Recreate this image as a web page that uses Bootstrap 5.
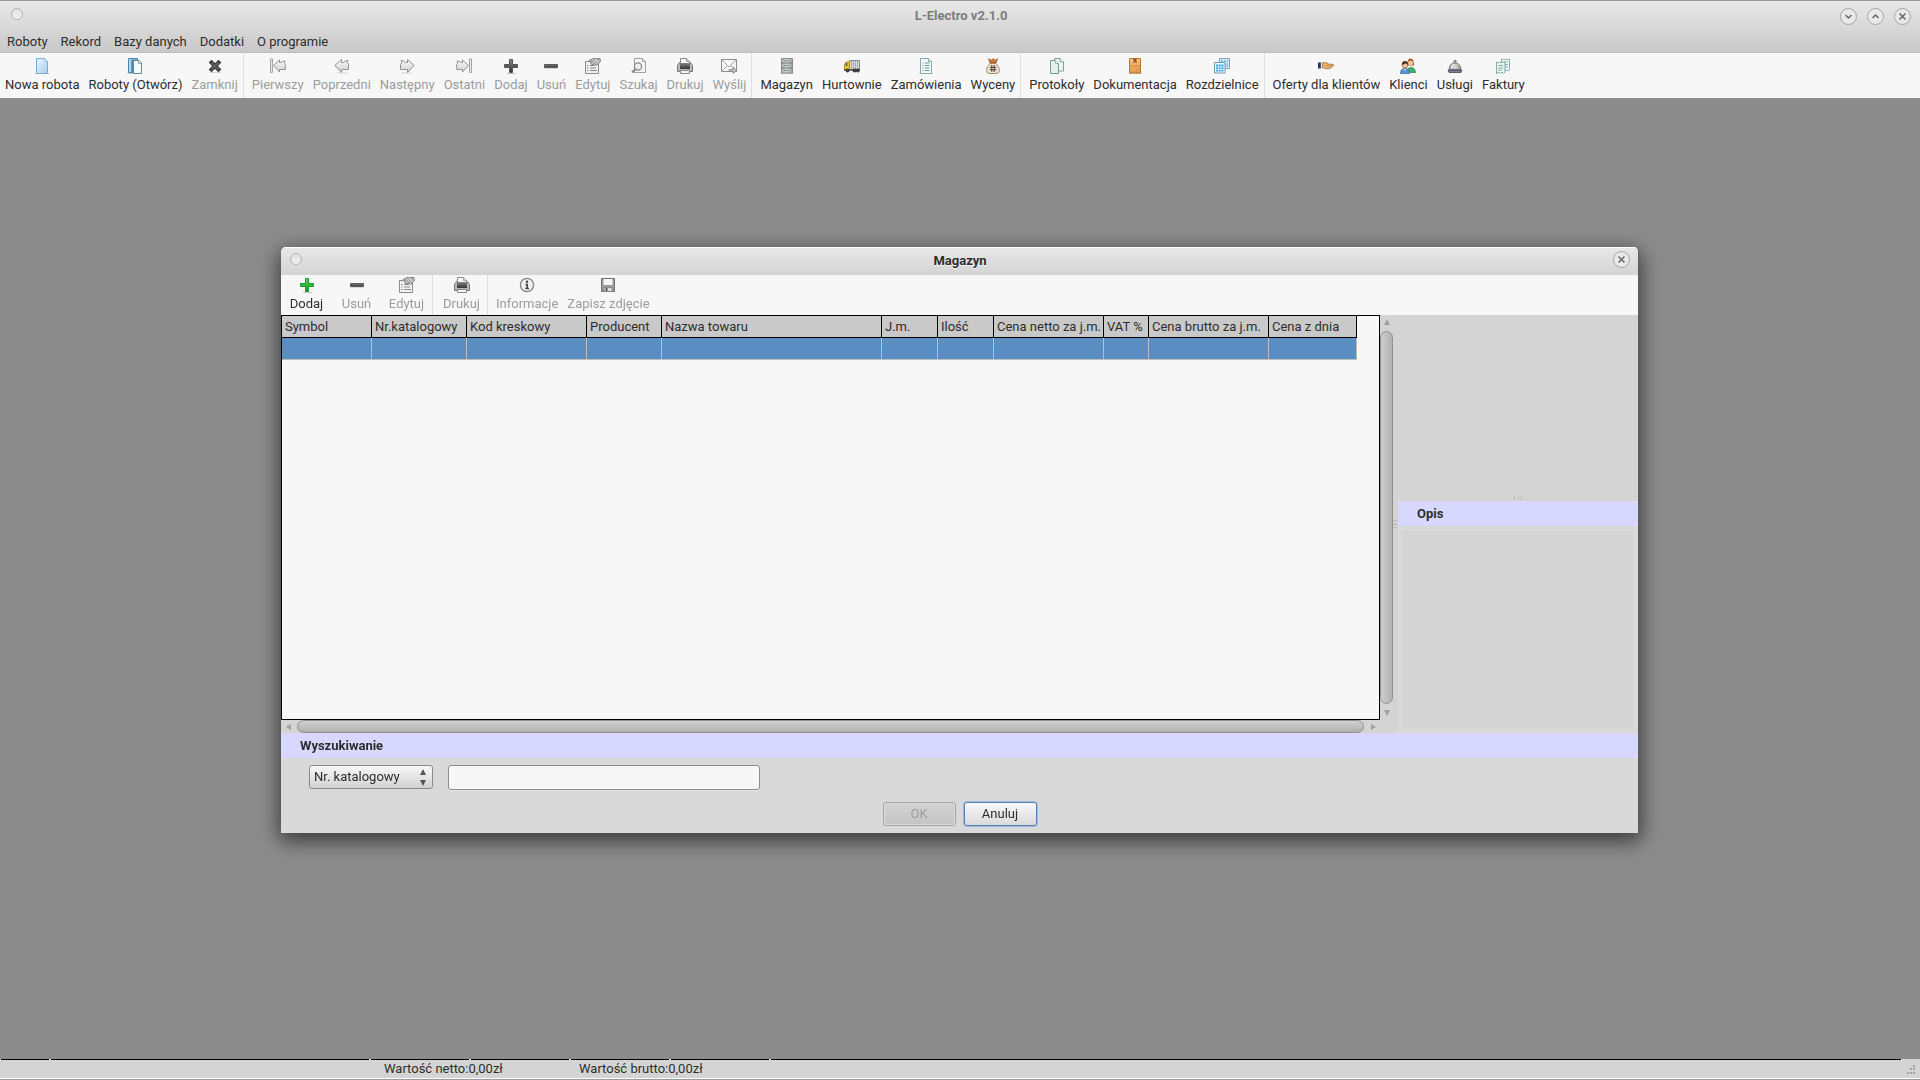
<!DOCTYPE html>
<html lang="pl">
<head>
<meta charset="utf-8">
<meta name="viewport" content="width=device-width, initial-scale=1">
<title>L-Electro v2.1.0</title>
<link rel="stylesheet" href="https://cdn.jsdelivr.net/npm/bootstrap@5.3.0/dist/css/bootstrap.min.css">
<style>
  body { font-family: Roboto, "Noto Sans", sans-serif; font-size: 13px; line-height: 16px; color: #2d2d2d; background: #8c8c8c; }
  button, input, select { font: inherit; color: inherit; }
  .app-head { background: linear-gradient(#e9e9e9, #c8c8c8); border-top: 1px solid #9a9a9a; border-bottom: 1px solid #bdbdbd; }
  .app-title { height: 30px; padding: 0 9px 0 11px; }
  .app-title h1 { font-size: 13px; line-height: 16px; color: #7d7d7d; }
  .title-side { width: 120px; }
  .win-btns { gap: 10px; }
  .menu-bar { height: 21px; padding-left: 1px; }
  .menu-bar a { color: #2d2d2d; padding: 3px 7px 1px 6px; text-decoration: none; }
  .ring { width: 12px; height: 12px; border: 1px solid #b3b3b3; border-radius: 50%; background: linear-gradient(#e2e2e2, #f1f1f1); }
  .win-btn { width: 17px; height: 17px; border: 1px solid #a5a5a5; border-radius: 50%; background: #e9e9e9; padding: 0; line-height: 0; }
  .win-btn svg { width: 9px; height: 9px; fill: none; stroke: #666; stroke-width: 1.5; }
  .tools { background: #f7f7f7; min-height: 40px; padding-left: 1px; }
  .tools.main-tools { min-height: 45px; }
  .tool { border: 0; background: none; padding: 2px 5px 0 4px; display: flex; flex-direction: column; align-items: center; white-space: nowrap; }
  .main-tools .tool { padding-top: 5px; }
  .tool svg { width: 16px; height: 16px; margin-bottom: 3px; }
  .tool:disabled { color: #9c9c9c; }
  .tool-wide { min-width: 50px; }
  .tool-line { width: 5px; border-left: 1px solid #dedede; }
  .status { height: 21px; background: #d4d4d4; border-bottom: 1px solid #9d9d9d; box-shadow: inset 0 -1px #fff; }
  .seg-line { gap: 2px; padding: 0 19px 0 1px; height: 1px; background: #d4d4d4; }
  .seg-line span { background: #000; width: 98px; }
  .seg-line .seg-a { width: 48px; }
  .seg-line .seg-b { width: 318px; }
  .status-text { padding-left: 384px; padding-top: 1px; }
  .status-text span { width: 195px; white-space: nowrap; }
  .grip { right: 4px; bottom: 4px; }
  .dialog-win { width: 1358px; max-width: 100%; background: #d9d9d9; border-right: 1px solid #5e5e5e; border-radius: 5px 5px 0 0; box-shadow: 0 6px 20px 2px rgba(0,0,0,.6); overflow: hidden; }
  .dialog-head { height: 28px; background: linear-gradient(#e7e7e7, #d4d4d4); border-top: 1px solid #fff; padding: 0 8px 1px 9px; }
  .dialog-head h2 { font-size: 13px; line-height: 16px; text-shadow: 0 1px #f4f4f4; }
  .dialog-main { height: 418px; background: #d4d4d4; }
  .sheet { background: #f7f7f7; border: 1px solid #000; overflow: hidden; }
  .sheet table { table-layout: fixed; width: 1075px; border-collapse: separate; border-spacing: 0; }
  .sheet th { height: 22px; padding: 1px 0 0 3px; font-weight: 400; background: #c9c9c9; border-right: 1px solid #000; border-bottom: 1px solid #000; white-space: nowrap; }
  .sheet td { height: 22px; padding: 0; background: #5a8dc2; border-right: 1px solid #bdbdbd; border-bottom: 1px solid #bdbdbd; }
  .bar-v { width: 13px; } .bar-h { height: 13px; padding-right: 15px; }
  .bar-v svg, .bar-h svg { width: 8px; height: 6px; fill: #9f9f9f; }
  .thumb { border: 1px solid #8f8f8f; border-radius: 7px; }
  .bar-v .thumb { width: 13px; margin: 6px 0 6px; background: linear-gradient(90deg, #cfcfcf, #b1b1b1); }
  .bar-h .thumb { height: 13px; margin: 0 6px 0 4px; background: linear-gradient(#cfcfcf, #b1b1b1); }
  .split-v { width: 5px; }
  .split-v svg { width: 4px; height: 8px; } .split-h { height: 5px; } .split-h svg { width: 8px; height: 4px; }
  .split-v svg, .split-h svg { stroke: #b9b9b9; }
  .side { width: 240px; }
  .photo { height: 181px; }
  .band { background: #d8d8ff; font-size: 13px; line-height: 16px; height: 25px; padding: 1px 19px 0; margin: 0; font-weight: 700; }
  .desc-wrap { background: #d9d9d9; padding: 5px; }
  .desc { background: #d4d4d4; border: 0; resize: none; }
  .search { height: 75px; padding-top: 7px; }
  .pick { height: 24px; width: 124px; padding: 0 20px 1px 4px; appearance: none; border: 1px solid #8a8a8a; border-radius: 3px; background: linear-gradient(#f8f8f8, #d2d2d2); }
  .pick-wrap svg { right: 6px; top: 4px; width: 8px; height: 17px; fill: #555; }
  .query { width: 312px; height: 25px; border: 1px solid #8d8d8d; border-radius: 3px; background: #f7f7f7; box-shadow: 0 1px #e4e4e4; }
  .fields { padding-left: 28px; gap: 15px; }
  .answers { gap: 8px; padding-top: 12px; }
  .dlg-btn { width: 73px; height: 24px; padding: 0 0 1px; border: 1px solid #8a8a8a; border-radius: 3px; background: linear-gradient(#f8f8f8, #dadada); }
  .dlg-btn:disabled { color: #9c9c9c; border-color: #a3a3a3; background: linear-gradient(#d2d2d2, #c5c5c5); box-shadow: inset 0 0 0 1px #dcdcdc; }
  .dlg-main { border-color: #5182b8; box-shadow: 0 0 0 1px #9fb9d6; }
</style>
<script src="https://cdn.jsdelivr.net/npm/bootstrap@5.3.0/dist/js/bootstrap.bundle.min.js"></script>
</head>
<body class="min-vh-100 d-flex flex-column">

<svg class="position-absolute" width="0" height="0" aria-hidden="true">
  <defs>
    <linearGradient id="g-blue" x2="1" y2="1"><stop stop-color="#e9f4fd"/><stop offset="1" stop-color="#a9cfee"/></linearGradient>
    <linearGradient id="g-gray" x2="0" y2="1"><stop stop-color="#fafafa"/><stop offset="1" stop-color="#cfcfcf"/></linearGradient>
    <linearGradient id="g-dark" x2="0" y2="1"><stop stop-color="#858585"/><stop offset="1" stop-color="#333"/></linearGradient>
    <linearGradient id="g-green" x2="0" y2="1"><stop stop-color="#5fd35f"/><stop offset="1" stop-color="#0b9b1e"/></linearGradient>
    <linearGradient id="g-steel"><stop stop-color="#a8a8a8"/><stop offset=".5" stop-color="#d5dcd8"/><stop offset="1" stop-color="#999"/></linearGradient>
    <linearGradient id="g-wood" x2="0" y2="1"><stop stop-color="#f3c583"/><stop offset="1" stop-color="#dc9a4c"/></linearGradient>
  </defs>
  <symbol id="i-new" viewBox="0 0 16 16"><path d="M1 15.500h14" stroke="#000" opacity=".18"/><path d="M2.500.5h8l3 3v12h-11z" fill="url(#g-blue)" stroke="#79abd1"/><path d="M10.500.500v3h3z" fill="#fff" stroke="#79abd1" stroke-width=".6"/></symbol>
  <symbol id="i-open" viewBox="0 0 16 16"><path d="M0 15.500h15" stroke="#000" opacity=".18"/><path d="M1.500.500h9v14h-9z" fill="#7fb3d3" stroke="#4e88ab"/><path d="M2 1h2v13H2z" fill="#b3d7ec"/><path d="M6.500 2.500h5.500l2.500 2.500v10.500h-8z" fill="#f3f9f8" stroke="#668a8b"/><path d="M11.500 3v2.500H14" fill="none" stroke="#668a8b" stroke-width=".7"/><path d="M4.500 1l2 2v12l-2-1z" fill="#4788ad"/></symbol>
  <symbol id="i-x" viewBox="0 0 16 16"><path d="M3 14.500h11" stroke="#000" opacity=".15"/><path d="M4.500 4.500l7 7M11.500 4.500l-7 7" stroke="#3c3c3c" stroke-width="4" stroke-linecap="square"/><path d="M4.500 4.500l7 7M11.500 4.500l-7 7" stroke="#666" stroke-width="1.600"/></symbol>
  <symbol id="i-prev" viewBox="0 0 16 16"><path d="M3 15h11" stroke="#000" opacity=".12"/><path d="M.8 7.500l6.700-6v3h2q1.500-2 4.500-2-2 2 .500 4v5h-7v3z" fill="url(#g-gray)" stroke="#929292" stroke-linejoin="round"/></symbol>
  <symbol id="i-next" viewBox="0 0 16 16"><path d="M2 15h11" stroke="#000" opacity=".12"/><path d="M15.200 7.500l-6.700-6v3h-2q-1.500-2-4.500-2 2 2-.500 4v5h7v3z" fill="url(#g-gray)" stroke="#929292" stroke-linejoin="round"/></symbol>
  <symbol id="i-first" viewBox="0 0 16 16"><path d="M.5 1h2v13.500h-2z" fill="#e5e5e5" stroke="#939393" stroke-width=".8"/><path d="M3.500 7.500l6-5.500v2.500h1.500q1-1.500 4-1.500-1.500 2 .3 3.500v5h-5.800v2.500z" fill="url(#g-gray)" stroke="#929292" stroke-linejoin="round"/></symbol>
  <symbol id="i-last" viewBox="0 0 16 16"><path d="M13.500 1h2v13.500h-2z" fill="#e5e5e5" stroke="#939393" stroke-width=".8"/><path d="M12.500 7.500l-6-5.500v2.500h-1.500q-1-1.500-4-1.500 1.500 2-.3 3.500v5h5.800v2.500z" fill="url(#g-gray)" stroke="#929292" stroke-linejoin="round"/></symbol>
  <symbol id="i-plus" viewBox="0 0 16 16"><path d="M4 15.500h9" stroke="#000" opacity=".2"/><path d="M6.500 1.500h3v5h5v3h-5v5h-3v-5h-5v-3h5z" fill="url(#g-dark)" stroke="#555"/></symbol>
  <symbol id="i-add" viewBox="0 0 16 16"><path d="M4 15.500h9" stroke="#000" opacity=".2"/><path d="M6.500 1.500h3v5h5v3h-5v5h-3v-5h-5v-3h5z" fill="url(#g-green)" stroke="#179c2d"/></symbol>
  <symbol id="i-minus" viewBox="0 0 16 16"><path d="M1 10.500h14" stroke="#000" opacity=".12"/><path d="M1.500 6.500h13v3h-13z" fill="url(#g-dark)" stroke="#5a5a5a"/></symbol>
  <symbol id="i-edit" viewBox="0 0 16 16"><path d="M.5 3.500h13v12h-13z" fill="#f2f2f2" stroke="#8c8c8c"/><path d="M2 7.500h1.500M5 7.500h5M2 10h1.500M5 10h6M2 12.500h1.500M5 12.500h7" stroke="#888"/><path d="M4 2.500l4-2h7l.5 3-4 4-2-1.500-2.500 1z" fill="#aaa" stroke="#777" stroke-width=".8"/><path d="M7 1l5 5M9.500.500l4 4M12 1l-5 5M15 2l-4 4" stroke="#ddd" stroke-width=".7"/></symbol>
  <symbol id="i-find" viewBox="0 0 16 16"><path d="M3.500.500h8l3 3v11h-11z" fill="#f5f5f5" stroke="#a0a0a0"/><path d="M11.500.500v3h3" fill="#ddd" stroke="#a0a0a0"/><circle cx="7" cy="8.500" r="3.600" fill="#eee" stroke="#888" stroke-width="1.200"/><path d="M4.500 11l-3.500 3.500" stroke="#888" stroke-width="2.200"/></symbol>
  <symbol id="i-print" viewBox="0 0 16 16"><path d="M.5 7.500l2-3h11l2 3v6h-15z" fill="#b7b7b7" stroke="#767676"/><path d="M3.500.500h6l3 3v4h-9z" fill="#f8f8f8" stroke="#8b8b8b"/><path d="M9.500.500v3h3" fill="#ccc" stroke="#8b8b8b" stroke-width=".7"/><path d="M3 5h10v6H3z" fill="url(#g-dark)"/><path d="M3.500 12.500h9v3h-9z" fill="#f5f5f5" stroke="#888"/></symbol>
  <symbol id="i-mail" viewBox="0 0 16 16"><path d="M.5 1.500h15v12H.5z" fill="#f5f5f5" stroke="#8d8d8d"/><path d="M1 2l7 7 7-7M1 13l5.500-5.500M15 13l-5.500-5.500" fill="none" stroke="#a2a2a2"/><path d="M8 11.500h4v-2.500l4 3.500-4 3v-2H8z" fill="#bbb" stroke="#808080" stroke-width=".7"/></symbol>
  <symbol id="i-store" viewBox="0 0 16 16"><path d="M1 15.500h14" stroke="#000" opacity=".18"/><path d="M2.500.500h11v14.500h-11z" fill="url(#g-steel)" stroke="#8c8c90"/><path d="M2.500 5h11M2.500 10h11" stroke="#77777c"/><path d="M5 2.800h5M5 7.500h5M5 12.500h5" stroke="#7a8f86"/></symbol>
  <symbol id="i-truck" viewBox="0 0 16 16"><path d="M5.500 2.500h10v9h-10z" fill="#d5d8d5" stroke="#838a87"/><path d="M7.500 3v8M9.500 3v8M11.500 3v8M13.500 3v8" stroke="#9da5a0" stroke-width=".8"/><path d="M.5 11.500v-4.500l1.500-3h3.500v7.500z" fill="#f7c52b" stroke="#c78610"/><path d="M1.500 5h2v3h-2z" fill="#5b6f87"/><path d="M0 12h16" stroke="#555" stroke-width="1.500"/><g fill="#555" stroke="#222"><circle cx="3.500" cy="12.500" r="1.500"/><circle cx="10.500" cy="12.500" r="1.500"/><circle cx="13.800" cy="12.500" r="1.500"/></g></symbol>
  <symbol id="i-order" viewBox="0 0 16 16"><path d="M1 15.500h14" stroke="#000" opacity=".18"/><path d="M2.500.500h8l3 3v12h-11z" fill="#f1faf9" stroke="#8aa9ab"/><path d="M10.500.500v3h3" fill="#fff" stroke="#8aa9ab"/><path d="M4.500 5h1M7 5h4.500M4.500 7.500h1M7 7.500h4.500M4.500 10h1M7 10h4.500M4.500 12.500h1M7 12.500h4.500" stroke="#6c9799"/></symbol>
  <symbol id="i-bag" viewBox="0 0 16 16"><path d="M5 5L3.500.800l3 1.500L8 .500l2 1.800 2.500-1.500L11 5z" fill="#cf7a3e" stroke="#9b5426" stroke-width=".7"/><path d="M5.500 5h5q4 3.500 4 7.500 0 3-3.500 3h-6q-3.500 0-3.500-3Q1.500 8.500 5.500 5z" fill="#eee4d2" stroke="#a38c6c"/><path d="M5 4.800h6" stroke="#a85823" stroke-width="1.500"/><path d="M6.800 7v7M9.200 7v7M4.700 9.300h6.600M4.700 11.700h6.600" stroke="#4e4235"/></symbol>
  <symbol id="i-copy" viewBox="0 0 16 16"><path d="M5.500.500h5.500l3.500 3.500v9h-9z" fill="#eef8f6" stroke="#7c9fa1"/><path d="M11 .5V4h3.500" fill="#fff" stroke="#7c9fa1"/><path d="M1.500 2.500h5l3 3v10h-8z" fill="#e2f0ed" stroke="#77999b"/><path d="M6.500 2.500v3h3" fill="#fff" stroke="#77999b" stroke-width=".7"/></symbol>
  <symbol id="i-book" viewBox="0 0 16 16"><path d="M2 15.500h13" stroke="#000" opacity=".2"/><path d="M2.500.500h11v14.500h-11z" fill="url(#g-wood)" stroke="#b9762f"/><path d="M3 8h10" stroke="#c98a45"/><path d="M6.500.500h3v5l-1.500-1.500-1.500 1.500z" fill="#8c5628"/><path d="M13.500 11.500l-3.500 3.500v-3.500z" fill="#f7dab0" stroke="#b9762f" stroke-width=".7"/></symbol>
  <symbol id="i-grids" viewBox="0 0 16 16"><path d="M5.500.500h10v10h-10z" fill="#d9f0fa" stroke="#7fa3ad"/><path d="M7 2h7v7H7z" fill="#5fc4f0"/><path d="M9.500 2v7M12 2v7M7 4.500h7" stroke="#e3f5fc"/><path d="M.5 4.500h10.500v10.500H.5z" fill="#eefafe" stroke="#7499a4"/><path d="M2 6.500h7.500v7H2z" fill="#37aee8"/><path d="M4.500 6.500v7M7 6.500v7M2 9h7.500M2 11.500h7.500" stroke="#d7f1fc" stroke-width=".8"/></symbol>
  <symbol id="i-hand" viewBox="0 0 16 16"><path d="M0 4.500h3v6H0z" fill="#2c3557"/><path d="M3 4.500h1.500v5.500H3z" fill="#fff" stroke="#b8b8c0" stroke-width=".5"/><path d="M4.500 5l3-.5 3 1.500 5 .5q.8 1-.5 1.800-3 2.700-6 2.700l-4.500-1.500z" fill="#eab273" stroke="#a76f33" stroke-width=".8"/><path d="M8 7.500q3 1.500 6-.5" fill="none" stroke="#b67a3c" stroke-width=".8"/></symbol>
  <symbol id="i-people" viewBox="0 0 16 16"><path d="M7 14.500q0-5 4-5t4.500 5z" fill="#42b06a" stroke="#267f47" stroke-width=".7"/><path d="M7.500 7.500Q7 .500 10.500.500t3.500 7z" fill="#9b4e24"/><circle cx="10.500" cy="5" r="2.500" fill="#f3c699"/><path d="M.5 15.500q0-5 4.500-5t4.500 5z" fill="#5594d8" stroke="#2b64a6" stroke-width=".7"/><circle cx="5" cy="7" r="3" fill="#f4c396" stroke="#8a5635" stroke-width=".6"/><path d="M2 7q-.5-4 3-4t3 4L6 5.500z" fill="#563521"/><path d="M4 11l1 2 1-2z" fill="#fff"/></symbol>
  <symbol id="i-bell" viewBox="0 0 16 16"><circle cx="8" cy="3.500" r="1.300" fill="#aaa" stroke="#666" stroke-width=".8"/><path d="M2 11.500q.5-6.500 6-6.500t6 6.500z" fill="url(#g-steel)" stroke="#777"/><path d="M4.500 10q.5-3 2.500-3.500" fill="none" stroke="#fff"/><path d="M1 12h14l-1 2.500H2z" fill="#777b8a" stroke="#45475a" stroke-width=".8"/></symbol>
  <symbol id="i-bills" viewBox="0 0 16 16"><path d="M6.500 1l1 .8 1.300-.8 1.300.8 1.300-.8 1.300.8 1.800-.8v11l-1.500 1-1.500-1-1.500 1-1.500-1-2 1z" fill="#eff8f4" stroke="#799c9c" stroke-width=".8"/><path d="M9 4h4M9 6.500h4M10 9h3" stroke="#89b2a8"/><path d="M1.500 4l1.500.8L4.500 4l1.500.8L7.500 4 10 4.500V14l-1.500 1.500L7 14l-1.500 1.500L4 14l-2.500 1.500z" fill="#e7f4ef" stroke="#6f9696" stroke-width=".8"/><path d="M3.500 7.500h4.500M3.500 10h4.500M3.500 12h3" stroke="#80aaa0"/></symbol>
  <symbol id="i-info" viewBox="0 0 16 16"><circle cx="8" cy="8" r="6.600" fill="#f1f1f1" stroke="#858585" stroke-width="1.300"/><circle cx="8" cy="4.700" r="1.200" fill="#444"/><path d="M6.500 7.500h1.700v4M6.300 11.500h3.700" fill="none" stroke="#444" stroke-width="1.600"/></symbol>
  <symbol id="i-save" viewBox="0 0 16 16"><path d="M1.500 1.500h13v13H1.500z" fill="#9a9a9a" stroke="#707070"/><path d="M3.500 2h9v6h-9z" fill="#f4f4f4"/><path d="M4 10.500h8v4H4z" fill="#ddd" stroke="#777" stroke-width=".7"/><path d="M5.500 11h2v3h-2z" fill="#555"/></symbol>
</svg>

<header class="app-head">
  <div class="app-title d-flex align-items-center justify-content-between">
    <div class="title-side pb-1"><div class="ring"></div></div>
    <h1 class="fw-bold mb-0">L-Electro v2.1.0</h1>
    <div class="title-side win-btns d-flex justify-content-end">
      <button class="win-btn" type="button" aria-label="Minimalizuj"><svg viewBox="0 0 9 9"><path d="M1.500 3l3 3 3-3"/></svg></button>
      <button class="win-btn" type="button" aria-label="Maksymalizuj"><svg viewBox="0 0 9 9"><path d="M1.500 6l3-3 3 3"/></svg></button>
      <button class="win-btn" type="button" aria-label="Zamknij program"><svg viewBox="0 0 9 9"><path d="M1.500 1.500l6 6M7.500 1.500l-6 6"/></svg></button>
    </div>
  </div>
  <nav class="menu-bar d-flex">
    <a href="#">Roboty</a><a href="#">Rekord</a><a href="#">Bazy danych</a><a href="#">Dodatki</a><a href="#">O programie</a>
  </nav>
</header>

<div class="tools main-tools d-flex" role="toolbar" aria-label="Główny pasek">
  <button class="tool"><svg><use href="#i-new"/></svg>Nowa robota</button>
  <button class="tool"><svg><use href="#i-open"/></svg>Roboty (Otwórz)</button>
  <button class="tool" disabled><svg><use href="#i-x"/></svg>Zamknij</button>
  <div class="tool-line"></div>
  <button class="tool" disabled><svg><use href="#i-first"/></svg>Pierwszy</button>
  <button class="tool" disabled><svg><use href="#i-prev"/></svg>Poprzedni</button>
  <button class="tool" disabled><svg><use href="#i-next"/></svg>Następny</button>
  <button class="tool" disabled><svg><use href="#i-last"/></svg>Ostatni</button>
  <button class="tool" disabled><svg><use href="#i-plus"/></svg>Dodaj</button>
  <button class="tool" disabled><svg><use href="#i-minus"/></svg>Usuń</button>
  <button class="tool" disabled><svg><use href="#i-edit"/></svg>Edytuj</button>
  <button class="tool" disabled><svg><use href="#i-find"/></svg>Szukaj</button>
  <button class="tool" disabled><svg><use href="#i-print"/></svg>Drukuj</button>
  <button class="tool" disabled><svg><use href="#i-mail"/></svg>Wyślij</button>
  <div class="tool-line"></div>
  <button class="tool"><svg><use href="#i-store"/></svg>Magazyn</button>
  <button class="tool"><svg><use href="#i-truck"/></svg>Hurtownie</button>
  <button class="tool"><svg><use href="#i-order"/></svg>Zamówienia</button>
  <button class="tool"><svg><use href="#i-bag"/></svg>Wyceny</button>
  <div class="tool-line"></div>
  <button class="tool"><svg><use href="#i-copy"/></svg>Protokoły</button>
  <button class="tool"><svg><use href="#i-book"/></svg>Dokumentacja</button>
  <button class="tool"><svg><use href="#i-grids"/></svg>Rozdzielnice</button>
  <div class="tool-line"></div>
  <button class="tool"><svg><use href="#i-hand"/></svg>Oferty dla klientów</button>
  <button class="tool"><svg><use href="#i-people"/></svg>Klienci</button>
  <button class="tool"><svg><use href="#i-bell"/></svg>Usługi</button>
  <button class="tool"><svg><use href="#i-bills"/></svg>Faktury</button>
</div>

<main class="flex-grow-1"></main>

<footer class="status position-relative">
  <div class="seg-line d-flex">
    <span class="seg-a"></span><span class="seg-b"></span><span></span><span></span><span></span><span></span><span class="flex-fill"></span>
  </div>
  <div class="status-text d-flex"><span>Wartość netto:0,00zł</span><span>Wartość brutto:0,00zł</span></div>
  <svg class="grip position-absolute" width="10" height="10" fill="#a3a398"><path d="M7 0h2v2H7zM4 3h2v2H4zM7 3h2v2H7zM1 7h2v2H1zM4 7h2v2H4zM7 7h2v2H7z"/></svg>
</footer>

<div class="position-fixed top-0 start-0 w-100 h-100 d-flex align-items-center justify-content-center pe-none">
  <section class="dialog-win pe-auto" role="dialog" aria-labelledby="dlg-title">
    <div class="dialog-head d-flex align-items-center justify-content-between">
      <div class="title-side pb-1"><div class="ring"></div></div>
      <h2 id="dlg-title" class="fw-bold mb-0">Magazyn</h2>
      <div class="title-side pb-1 d-flex justify-content-end"><button class="win-btn" type="button" aria-label="Zamknij okno"><svg viewBox="0 0 9 9"><path d="M1.500 1.500l6 6M7.500 1.500l-6 6"/></svg></button></div>
    </div>
    <div class="tools d-flex" role="toolbar" aria-label="Magazyn">
      <button class="tool tool-wide"><svg><use href="#i-add"/></svg>Dodaj</button>
      <button class="tool tool-wide" disabled><svg><use href="#i-minus"/></svg>Usuń</button>
      <button class="tool tool-wide" disabled><svg><use href="#i-edit"/></svg>Edytuj</button>
      <div class="tool-line"></div>
      <button class="tool tool-wide" disabled><svg><use href="#i-print"/></svg>Drukuj</button>
      <div class="tool-line"></div>
      <button class="tool tool-wide" disabled><svg><use href="#i-info"/></svg>Informacje</button>
      <button class="tool tool-wide" disabled><svg><use href="#i-save"/></svg>Zapisz zdjęcie</button>
    </div>
    <div class="dialog-main d-flex">
      <div class="flex-fill d-flex flex-column overflow-hidden">
        <div class="flex-fill d-flex overflow-hidden">
          <div class="sheet flex-fill">
            <table>
              <colgroup>
                <col style="width:90px"><col style="width:95px"><col style="width:120px"><col style="width:75px"><col style="width:220px"><col style="width:56px"><col style="width:56px"><col style="width:110px"><col style="width:45px"><col style="width:120px"><col style="width:88px">
              </colgroup>
              <thead><tr><th>Symbol</th><th>Nr.katalogowy</th><th>Kod kreskowy</th><th>Producent</th><th>Nazwa towaru</th><th>J.m.</th><th>Ilość</th><th>Cena netto za j.m.</th><th>VAT %</th><th>Cena brutto za j.m.</th><th>Cena z dnia</th></tr></thead>
              <tbody><tr><td></td><td></td><td></td><td></td><td></td><td></td><td></td><td></td><td></td><td></td><td></td></tr></tbody>
            </table>
          </div>
          <div class="bar-v d-flex flex-column align-items-center pt-1">
            <svg viewBox="0 0 8 6" class="flex-shrink-0"><path d="M4 0l3 6H1z"/></svg>
            <div class="thumb flex-fill"></div>
            <svg viewBox="0 0 8 6" class="flex-shrink-0 mb-1"><path d="M4 6l3-6H1z"/></svg>
          </div>
        </div>
        <div class="bar-h d-flex align-items-center ps-1">
          <svg viewBox="0 0 8 6" class="flex-shrink-0"><path d="M1 3l5-3v6z"/></svg>
          <div class="thumb flex-fill"></div>
          <svg viewBox="0 0 8 6" class="flex-shrink-0"><path d="M6 3L1 0v6z"/></svg>
        </div>
      </div>
      <div class="split-v d-flex align-items-center"><svg><path d="M0 .5h4M0 4.500h4M0 7.500h4"/></svg></div>
      <div class="side d-flex flex-column">
        <div class="photo"></div>
        <div class="split-h d-flex justify-content-center"><svg><path d="M.5 0v4M4.500 0v4M7.500 0v4"/></svg></div>
        <h3 class="band d-flex align-items-center" id="desc-title">Opis</h3>
        <div class="desc-wrap flex-fill d-flex"><textarea class="desc w-100" aria-labelledby="desc-title" readonly></textarea></div>
      </div>
    </div>
    <h3 class="band d-flex align-items-center" id="search-title">Wyszukiwanie</h3>
    <form class="search d-flex flex-column" onsubmit="return false">
      <div class="fields d-flex">
        <div class="pick-wrap position-relative">
          <select class="pick" aria-label="Pole wyszukiwania"><option>Nr. katalogowy</option></select>
          <svg class="position-absolute pe-none" viewBox="0 0 8 17"><path d="M4 0l3 6H1zM4 17l3-6H1z"/></svg>
        </div>
        <input class="query" type="text" aria-labelledby="search-title">
      </div>
      <div class="answers d-flex justify-content-center">
        <button class="dlg-btn" type="button" disabled>OK</button>
        <button class="dlg-btn dlg-main" type="button">Anuluj</button>
      </div>
    </form>
  </section>
</div>
</body>
</html>
